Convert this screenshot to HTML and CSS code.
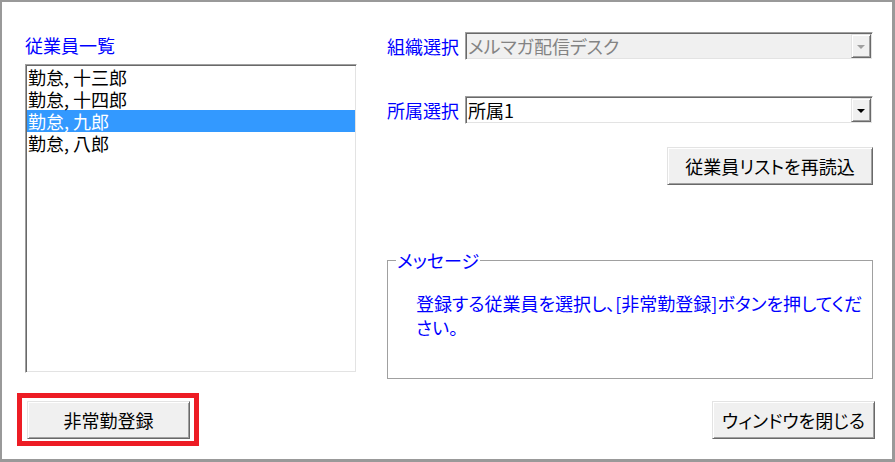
FILE: index.html
```html
<!doctype html>
<html>
    <head>
        <title>非常勤登録</title>
        <link rel="stylesheet" href="styles.css">
    </head>
    <body>
        <div class="window">
            <div class="main">
                <div class="staff">
                    <div class="caption">従業員一覧</div>
                    <ul class="listbox">
                        <li>勤怠, 十三郎</li>
                        <li>勤怠, 十四郎</li>
                        <li class="selected">勤怠, 九郎</li>
                        <li>勤怠, 八郎</li>
                    </ul>
                </div>

                <div class="filters">
                    <div class="field">
                        <label class="caption">組織選択</label>
                        <div class="combo combo_disabled">
                            <span class="value">メルマガ配信デスク</span>
                            <span class="arrow"></span>
                        </div>
                    </div>
                    <div class="field">
                        <label class="caption">所属選択</label>
                        <div class="combo">
                            <span class="value">所属1</span>
                            <span class="arrow"></span>
                        </div>
                    </div>

                    <button type="button" class="btn btn_reload">従業員リストを再読込</button>

                    <fieldset class="messages">
                        <legend>メッセージ</legend>
                        <p>登録する従業員を選択し、[非常勤登録]ボタンを押してください。</p>
                    </fieldset>
                </div>
            </div>

            <div class="footer">
                <div class="highlight">
                    <button type="button" class="btn">非常勤登録</button>
                </div>
                <button type="button" class="btn btn_close">ウィンドウを閉じる</button>
            </div>
        </div>
    </body>
</html>
```

FILE: styles.css
```css
html, body {
  margin: 0;
}

body {
  font: 18px/22px "Noto Sans CJK JP", sans-serif;
  font-feature-settings: "palt";
  color: #000;
}

.window {
  width: 895px;
  height: 462px;
  box-sizing: border-box;
  border-style: solid;
  border-color: #999;
  border-width: 2px 3px 3px 2px;
  background-color: #fff;
}

.main {
  display: flex;
  gap: 30px;
  padding: 30px 19px 0 23px;
}

.caption {
  color: #0000ff;
}

/* Left: staff list */
.staff {
  width: 332px;
}

.staff .caption {
  margin: 2px 0 8px;
}

.listbox {
  list-style: none;
  margin: 0;
  padding: 1px;
  height: 309px;
  box-sizing: border-box;
  border: 1px solid;
  border-color: #a0a0a0 #fff #fff #a0a0a0;
  box-shadow: inset 1px 1px 0 #696969, inset -1px -1px 0 #e3e3e3;
}

.listbox li {
  height: 22px;
  padding-left: 1px;
  white-space: nowrap;
}

.listbox li.selected {
  background-color: #3399ff;
  color: #fff;
}

/* Right: selectors and messages */
.filters {
  flex: 1;
  display: flex;
  flex-direction: column;
}

.field {
  display: flex;
  align-items: center;
  height: 28px;
}

.field + .field {
  margin-top: 36px;
}

.field .caption {
  width: 78px;
}

.combo {
  flex: 1;
  display: flex;
  height: 28px;
  padding: 1px;
  box-sizing: border-box;
  border: 1px solid;
  border-color: #a0a0a0 #fff #fff #a0a0a0;
  box-shadow: inset 1px 1px 0 #696969, inset -1px -1px 0 #e3e3e3;
  background-color: #fff;
}

.combo .value {
  flex: 1;
  padding-left: 1px;
  line-height: 24px;
}

.combo .arrow {
  display: flex;
  align-items: center;
  justify-content: center;
  width: 20px;
  box-sizing: border-box;
  background-color: #f0f0f0;
  border: 1px solid;
  border-color: #e3e3e3 #696969 #696969 #e3e3e3;
  box-shadow: inset 1px 1px 0 #fff, inset -1px -1px 0 #a0a0a0;
}

.combo .arrow:after {
  content: "";
  border-top: 4px solid #000;
  border-left: 4px solid transparent;
  border-right: 4px solid transparent;
  margin-top: 1px;
}

.combo_disabled {
  background-color: #f0f0f0;
}

.combo_disabled .value {
  color: #838383;
}

.combo_disabled .arrow:after {
  border-top-color: #a0a0a0;
}

.btn {
  height: 38px;
  padding: 0;
  font: inherit;
  color: #000;
  cursor: pointer;
  background-color: #f0f0f0;
  border: 1px solid;
  border-color: #e3e3e3 #696969 #696969 #e3e3e3;
  box-shadow: inset 1px 1px 0 #fff, inset -1px -1px 0 #a0a0a0;
  width: 163px;
}

.btn_reload {
  align-self: flex-end;
  width: 206px;
  margin-top: 23px;
}

.messages {
  margin: 64px 0 0;
  padding: 0 0 0 8px;
  height: 130px;
  box-sizing: border-box;
  border: 1px solid #a0a0a0;
  min-width: 0;
}

.messages legend {
  padding: 0 1px;
  color: #0000ff;
}

.messages p {
  margin: 20px 0 0 20px;
  width: 450px;
  line-height: 24px;
  color: #0000ff;
}

/* Bottom buttons */
.footer {
  display: flex;
  justify-content: space-between;
  align-items: flex-start;
  padding: 14px 17px 0 15px;
}

.highlight {
  border: 5px solid #ed1c24;
  padding: 3px 4px 2px 5px;
}

.btn_close {
  margin-top: 8px;
}
```
